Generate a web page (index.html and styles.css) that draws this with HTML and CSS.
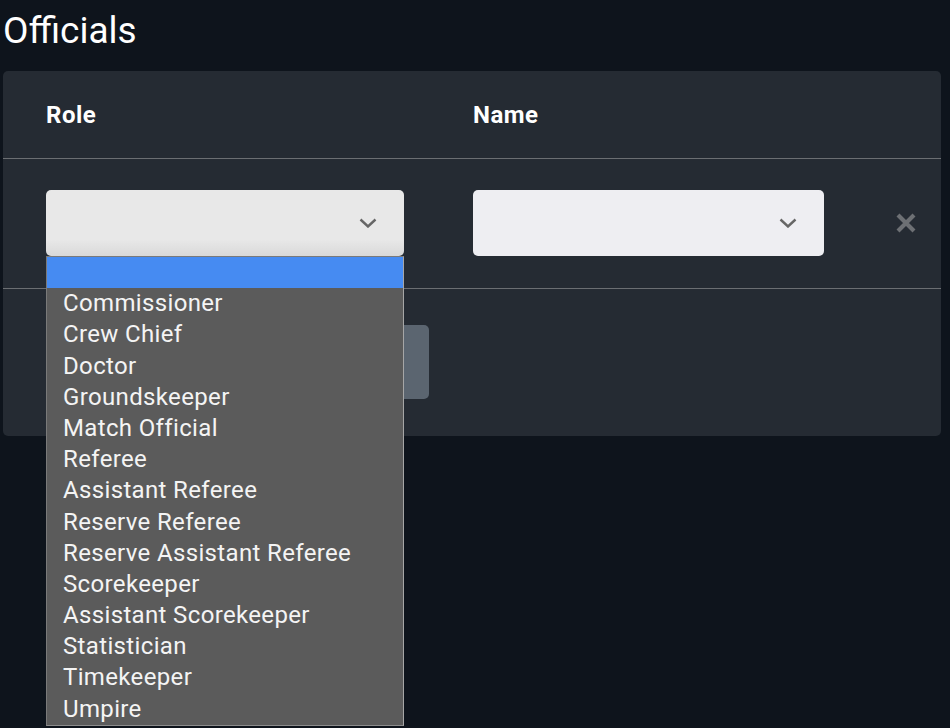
FILE: index.html
```html
<!DOCTYPE html>
<html lang="en">
<head>
<meta charset="utf-8">
<title>Officials</title>
<link rel="stylesheet" href="styles.css">
</head>
<body>
<main class="page">
  <h1 class="title">Officials</h1>
  <section class="card">
    <div class="grid head">
      <div class="col-label">Role</div>
      <div class="col-label">Name</div>
      <div></div>
    </div>
    <div class="grid row">
      <div class="cell">
        <div class="select select-role">
          <svg class="chev" width="18" height="10" viewBox="0 0 18 10"><path d="M1.5 1.5 L9 8.5 L16.5 1.5" fill="none" stroke="#666" stroke-width="2.4"/></svg>
        </div>
        <ul class="menu">
          <li class="sel">&nbsp;</li>
          <li>Commissioner</li>
          <li>Crew Chief</li>
          <li>Doctor</li>
          <li>Groundskeeper</li>
          <li>Match Official</li>
          <li>Referee</li>
          <li>Assistant Referee</li>
          <li>Reserve Referee</li>
          <li>Reserve Assistant Referee</li>
          <li>Scorekeeper</li>
          <li>Assistant Scorekeeper</li>
          <li>Statistician</li>
          <li>Timekeeper</li>
          <li>Umpire</li>
        </ul>
      </div>
      <div class="cell">
        <div class="select select-name">
          <svg class="chev" width="18" height="10" viewBox="0 0 18 10"><path d="M1.5 1.5 L9 8.5 L16.5 1.5" fill="none" stroke="#666" stroke-width="2.4"/></svg>
        </div>
      </div>
      <div class="cell remove">
        <svg width="22" height="22" viewBox="0 0 22 22"><path d="M3 3 L19 19 M19 3 L3 19" stroke="#6d7074" stroke-width="4.2" stroke-linecap="butt"/></svg>
      </div>
    </div>
    <div class="foot">
      <button class="add" type="button">Add Official</button>
    </div>
  </section>
</main>
</body>
</html>
```

FILE: styles.css
```css
html, body {
  margin: 0;
  padding: 0;
  background: #0e141c;
  font-family: Roboto, "Liberation Sans", Arial, sans-serif;
  color: #fff;
  height: 728px;
  overflow: hidden;
}

.page {
  padding: 10px 9px 0 3px;
}

.title {
  margin: 0 0 19px 0;
  font-size: 37px;
  line-height: 42px;
  font-weight: 400;
  color: #fff;
}

.card {
  background: #252b33;
  border-radius: 5px;
}

.grid {
  display: grid;
  grid-template-columns: 358px 351px 1fr;
  column-gap: 69px;
  padding-left: 43px;
  align-items: center;
}

.head {
  height: 87px;
  border-bottom: 1px solid #6b6e72;
}

.col-label {
  font-size: 24px;
  font-weight: 700;
  color: #fff;
  letter-spacing: 0.5px;
}

.row {
  padding: 31px 0 32px 43px;
  border-bottom: 1px solid #6b6e72;
}

.cell {
  position: relative;
}

.select {
  height: 66px;
  border-radius: 5px;
  display: flex;
  align-items: center;
  justify-content: flex-end;
  padding-right: 27px;
  box-sizing: border-box;
}

.select-role {
  background: linear-gradient(#e8e8e8 0%, #e8e8e8 75%, #d9d9d9 100%);
}

.select-name {
  background: #eeeef2;
}

.chev {
  display: block;
}

.remove {
  display: flex;
  align-items: center;
  padding-left: 2px;
}

.remove svg {
  display: block;
}

.foot {
  padding: 36px 0 37px 43px;
}

.add {
  display: block;
  width: 383px;
  height: 74px;
  border: none;
  border-radius: 5px;
  background: #5b6570;
  color: #fff;
  font-family: inherit;
  font-size: 22px;
}

.menu {
  position: absolute;
  top: 66px;
  left: 0;
  width: 358px;
  box-sizing: border-box;
  margin: 0;
  padding: 0;
  list-style: none;
  background: #5b5b5b;
  border: 1px solid #7a7a7a;
  border-right-color: #a6a6a6;
  border-bottom-color: #8c8c8c;
  z-index: 5;
}

.menu li {
  height: 31.2px;
  line-height: 31.2px;
  padding-left: 16px;
  font-size: 24px;
  font-weight: 400;
  letter-spacing: 0.35px;
  color: #f4f4f4;
  white-space: nowrap;
}

.menu li.sel {
  background: #468bf2;
}
```
